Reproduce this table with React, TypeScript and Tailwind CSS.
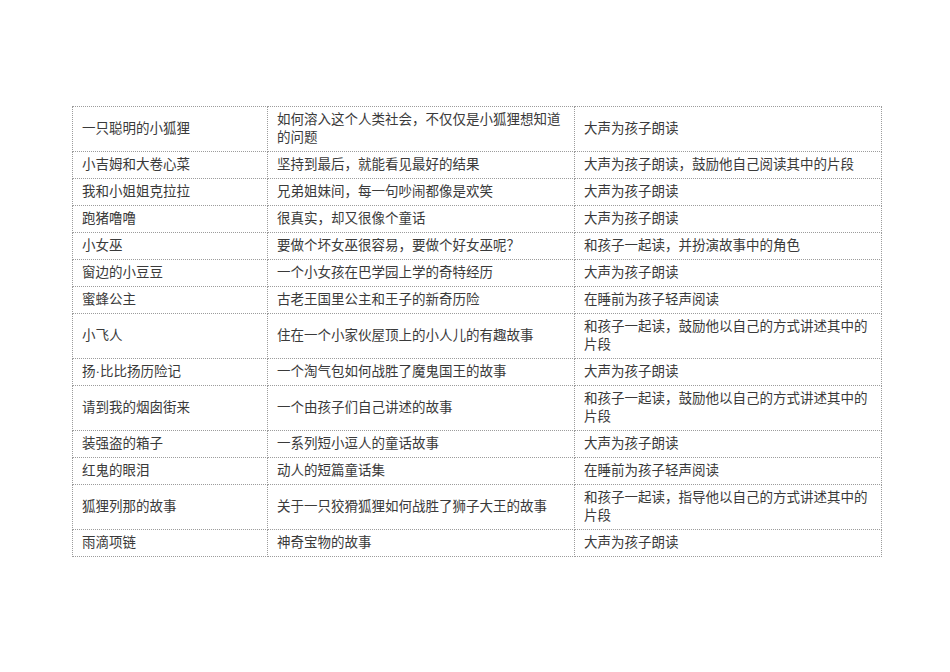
type Row = {
  title: string;
  about: string;
  how: string;
};

const rows: Row[] = [
  { title: "一只聪明的小狐狸", about: "如何溶入这个人类社会，不仅仅是小狐狸想知道的问题", how: "大声为孩子朗读" },
  { title: "小吉姆和大卷心菜", about: "坚持到最后，就能看见最好的结果", how: "大声为孩子朗读，鼓励他自己阅读其中的片段" },
  { title: "我和小姐姐克拉拉", about: "兄弟姐妹间，每一句吵闹都像是欢笑", how: "大声为孩子朗读" },
  { title: "跑猪噜噜", about: "很真实，却又很像个童话", how: "大声为孩子朗读" },
  { title: "小女巫", about: "要做个坏女巫很容易，要做个好女巫呢？", how: "和孩子一起读，并扮演故事中的角色" },
  { title: "窗边的小豆豆", about: "一个小女孩在巴学园上学的奇特经历", how: "大声为孩子朗读" },
  { title: "蜜蜂公主", about: "古老王国里公主和王子的新奇历险", how: "在睡前为孩子轻声阅读" },
  { title: "小飞人", about: "住在一个小家伙屋顶上的小人儿的有趣故事", how: "和孩子一起读，鼓励他以自己的方式讲述其中的片段" },
  { title: "扬·比比扬历险记", about: "一个淘气包如何战胜了魔鬼国王的故事", how: "大声为孩子朗读" },
  { title: "请到我的烟囱街来", about: "一个由孩子们自己讲述的故事", how: "和孩子一起读，鼓励他以自己的方式讲述其中的片段" },
  { title: "装强盗的箱子", about: "一系列短小逗人的童话故事", how: "大声为孩子朗读" },
  { title: "红鬼的眼泪", about: "动人的短篇童话集", how: "在睡前为孩子轻声阅读" },
  { title: "狐狸列那的故事", about: "关于一只狡猾狐狸如何战胜了狮子大王的故事", how: "和孩子一起读，指导他以自己的方式讲述其中的片段" },
  { title: "雨滴项链", about: "神奇宝物的故事", how: "大声为孩子朗读" },
];

// 单元格：虚线边框，垂直居中
const cell =
  "border border-dotted border-[#9c9c9c] px-[9px] py-[4px] align-middle leading-[18px]";

export default function App() {
  return (
    <div
      className="w-[950px] h-[672px] bg-white pt-[106px] pl-[72px] text-[13.5px] text-[#3a3a3a]"
      style={{ fontFamily: '"Liberation Serif", "Noto Sans CJK SC", serif' }}
    >
      <table className="border-collapse table-fixed w-[809px]">
        <colgroup>
          <col className="w-[195px]" />
          <col className="w-[307px]" />
          <col className="w-[307px]" />
        </colgroup>
        <tbody>
          {rows.map((r) => (
            <tr key={r.title}>
              <td className={cell}>{r.title}</td>
              <td className={cell}>{r.about}</td>
              <td className={cell}>{r.how}</td>
            </tr>
          ))}
        </tbody>
      </table>
    </div>
  );
}
